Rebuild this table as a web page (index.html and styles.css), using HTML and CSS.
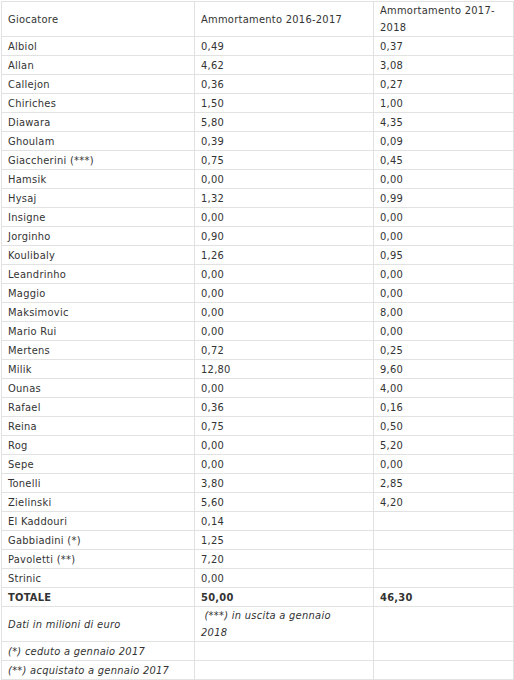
FILE: index.html
```html
<!DOCTYPE html>
<html>
<head>
<meta charset="utf-8">
<link rel="stylesheet" href="styles.css">
</head>
<body>
<table class="tbl">
<colgroup><col class="c1"><col class="c2"><col class="c3"></colgroup>
<tr class="head"><td>Giocatore</td><td>Ammortamento 2016-2017</td><td>Ammortamento 2017-2018</td></tr>
<tr><td>Albiol</td><td>0,49</td><td>0,37</td></tr>
<tr><td>Allan</td><td>4,62</td><td>3,08</td></tr>
<tr><td>Callejon</td><td>0,36</td><td>0,27</td></tr>
<tr><td>Chiriches</td><td>1,50</td><td>1,00</td></tr>
<tr><td>Diawara</td><td>5,80</td><td>4,35</td></tr>
<tr><td>Ghoulam</td><td>0,39</td><td>0,09</td></tr>
<tr><td>Giaccherini (***)</td><td>0,75</td><td>0,45</td></tr>
<tr><td>Hamsik</td><td>0,00</td><td>0,00</td></tr>
<tr><td>Hysaj</td><td>1,32</td><td>0,99</td></tr>
<tr><td>Insigne</td><td>0,00</td><td>0,00</td></tr>
<tr><td>Jorginho</td><td>0,90</td><td>0,00</td></tr>
<tr><td>Koulibaly</td><td>1,26</td><td>0,95</td></tr>
<tr><td>Leandrinho</td><td>0,00</td><td>0,00</td></tr>
<tr><td>Maggio</td><td>0,00</td><td>0,00</td></tr>
<tr><td>Maksimovic</td><td>0,00</td><td>8,00</td></tr>
<tr><td>Mario Rui</td><td>0,00</td><td>0,00</td></tr>
<tr><td>Mertens</td><td>0,72</td><td>0,25</td></tr>
<tr><td>Milik</td><td>12,80</td><td>9,60</td></tr>
<tr><td>Ounas</td><td>0,00</td><td>4,00</td></tr>
<tr><td>Rafael</td><td>0,36</td><td>0,16</td></tr>
<tr><td>Reina</td><td>0,75</td><td>0,50</td></tr>
<tr><td>Rog</td><td>0,00</td><td>5,20</td></tr>
<tr><td>Sepe</td><td>0,00</td><td>0,00</td></tr>
<tr><td>Tonelli</td><td>3,80</td><td>2,85</td></tr>
<tr><td>Zielinski</td><td>5,60</td><td>4,20</td></tr>
<tr><td>El Kaddouri</td><td>0,14</td><td></td></tr>
<tr><td>Gabbiadini (*)</td><td>1,25</td><td></td></tr>
<tr><td>Pavoletti (**)</td><td>7,20</td><td></td></tr>
<tr><td>Strinic</td><td>0,00</td><td></td></tr>
<tr class="total"><td>TOTALE</td><td>50,00</td><td>46,30</td></tr>
<tr class="note"><td><em>Dati in milioni di euro</em></td><td><em>&nbsp;(***) in uscita a gennaio<br>2018</em></td><td></td></tr>
<tr><td><em>(*) ceduto a gennaio 2017</em></td><td></td><td></td></tr>
<tr><td><em>(**) acquistato a gennaio 2017</em></td><td></td><td></td></tr>
</table>
</body>
</html>
```
FILE: styles.css
```css
html, body {
  margin: 0;
  padding: 0;
  background: #fff;
}
body {
  padding: 1px 0 0 1px;
}
.tbl {
  border-collapse: collapse;
  table-layout: fixed;
  width: 512px;
  font-family: "DejaVu Sans Condensed", "DejaVu Sans", Verdana, sans-serif;
  font-size: 11px;
  letter-spacing: 0.27px;
  color: #333;
}
.c1 { width: 193px; }
.c2 { width: 179px; }
.c3 { width: 140px; }
.tbl td {
  border: 1px solid #e2e2e2;
  padding: 2px 6px 0;
  line-height: 16px;
  height: 16px;
  vertical-align: middle;
  text-align: left;
}
.head td,
.note td {
  height: 34px;
  line-height: 17px;
  padding: 0 6px;
}
.total td {
  font-weight: bold;
}
```
